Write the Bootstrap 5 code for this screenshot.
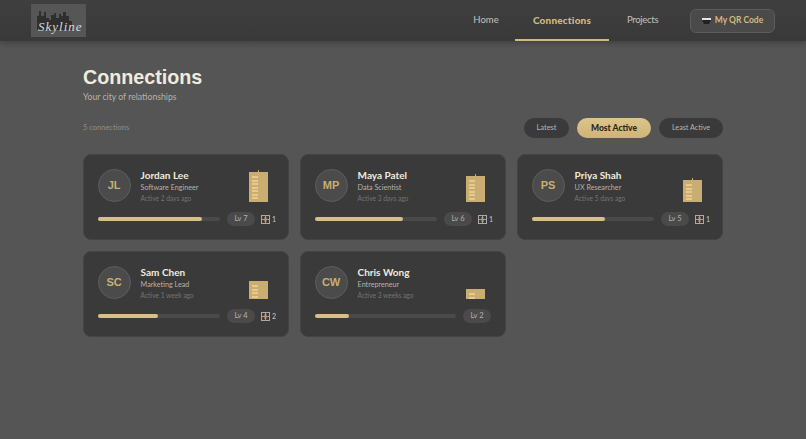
<!DOCTYPE html>
<html lang="en">
<head>
    <meta charset="UTF-8">
    <meta name="viewport" content="width=device-width, initial-scale=1.0">
    <title>Connections - Skyline</title>
    <link href="https://cdn.jsdelivr.net/npm/bootstrap@5.3.0/dist/css/bootstrap.min.css" rel="stylesheet">
    <style>
        body {
            font-family: 'Lato', 'Noto Sans', sans-serif;
            background: #555555;
            color: #f0ebdf;
            min-height: 439px;
        }
        .top-bar {
            height: 41px;
            padding: 0 31px;
            background: linear-gradient(180deg, #3f3f3f, #393939);
            box-shadow: 0 2px 6px rgba(0, 0, 0, 0.25);
        }
        .logo-box {
            width: 55px;
            height: 33px;
            background: #565656;
        }
        .logo-box svg { top: 4px; left: 3px; }
        .logo-word {
            top: 15px;
            left: 7px;
            font-family: 'Liberation Serif', serif;
            font-style: italic;
            font-size: 13px;
            letter-spacing: 1px;
            color: #d8d8d8;
            line-height: 16px;
        }
        .main-link {
            height: 41px;
            font-size: 9.5px;
            color: #c4c1ba;
            text-decoration: none;
            padding-top: 14px;
            line-height: 12px;
            text-align: center;
        }
        .main-link.current {
            color: #d4b97e;
            font-size: 10px;
            font-weight: 900;
            letter-spacing: .2px;
            border-bottom: 2px solid #d4b97e;
        }
        .link-home { width: 30px; margin-right: 14px; }
        .link-conn { width: 94px; margin-right: 18px; }
        .link-proj { width: 30px; margin-right: 33px; letter-spacing: -.3px; white-space: nowrap; }
        .qr-btn {
            width: 85px;
            height: 24px;
            font-size: 8.5px;
            font-weight: 700;
            color: #d4b97e;
            background: #4a4a4a;
            border: 1px solid #5c5c5c;
            border-radius: 6px;
        }
        .page-wrap { width: 640px; margin-left: 83px; }
        .page-title {
            font-family: 'Liberation Sans', Arial, sans-serif;
            font-weight: 700;
            font-size: 19.7px;
            line-height: 24px;
            margin: 24px 0 0;
            color: #f0ebdf;
        }
        .page-sub { font-size: 8.7px; line-height: 12px; margin-top: 2px; color: #b5b2ac; }
        .filter-row { margin-top: 15px; height: 20px; }
        .conn-count { font-size: 7.5px; color: #8f8d88; }
        .pill-btn {
            height: 20px;
            padding: 0;
            font-size: 7.5px;
            color: #b9b6b0;
            background: #3a3a3a;
            border: 0;
            border-radius: 10px;
        }
        .pill-latest { width: 45px; }
        .pill-most { width: 74px; font-size: 8.5px; font-weight: 900; color: #2b2620; background: linear-gradient(180deg, #dcc48c, #cfb478); }
        .pill-least { width: 64px; font-size: 7.2px; }
        .conn-grid {
            display: grid;
            grid-template-columns: repeat(3, 206px);
            gap: 11px;
            margin-top: 16px;
        }
        .conn-card {
            height: 86px;
            padding: 14px 14px 13px 13.6px;
            background: #3a3a3a;
            border: 1px solid #444444;
            border-radius: 8px;
        }
        .conn-top { height: 33px; }
        .avatar-ring {
            width: 33px;
            height: 33px;
            flex: none;
            font-family: 'Liberation Sans', Arial, sans-serif;
            font-weight: 700;
            font-size: 11px;
            color: #c9ae74;
            background: #4b4b4b;
            border: 1px solid #5e5e5e;
            border-radius: 50%;
        }
        .conn-info { margin-left: 10px; }
        .conn-name { font-size: 10px; font-weight: 700; line-height: 12px; color: #f0ebdf; }
        .conn-role { font-size: 7.2px; line-height: 10px; margin-top: 2px; color: #b5b2ac; }
        .conn-seen { font-size: 6.6px; line-height: 10px; color: #76746f; }
        .tower { width: 19px; flex: none; background: #c9ad72; margin-left: auto; margin-right: 6px; padding: 4px 0 0 3px; }
        .tower.has-mast::before { content: ""; position: absolute; top: -2px; left: 9px; width: 1px; height: 2px; background: #c9ad72; }
        .tower-win { width: 6px; height: 2px; margin-bottom: 1.5px; background: #e6cc8c; }
        .conn-bottom { margin-top: 10px; height: 14px; }
        .meter { height: 4px; background: #4a4a4a; border-radius: 2px; }
        .meter-fill { height: 100%; background: #d8bf85; border-radius: 2px; }
        .lv-pill {
            width: 28px;
            height: 14px;
            flex: none;
            margin-left: 7px;
            font-size: 7.5px;
            color: #b5b2ac;
            background: #4a4a4a;
            border-radius: 7px;
        }
        .proj-tag { width: 13px; flex: none; margin-left: 6px; font-size: 7px; color: #c9c6c0; gap: 2px; }
    </style>
</head>
<body>
    <div class="top-bar d-flex align-items-center justify-content-between position-relative">
        <div class="logo-box position-relative">
            <svg class="position-absolute" width="48" height="26" viewBox="0 0 48 26">
                <path d="M3 22V8h2V3h2v5h3V4h2v6h3v2h2V7h3V5h2v5h3V6h2v2h2V4h3v4h3v5h3v9z" fill="#2f2f2f"/>
            </svg>
            <span class="logo-word position-absolute">Skyline</span>
        </div>
        <nav class="d-flex align-items-center">
            <a class="main-link link-home" href="#">Home</a>
            <a class="main-link link-conn current" href="#">Connections</a>
            <a class="main-link link-proj" href="#">Projects</a>
            <button class="qr-btn btn d-flex align-items-center justify-content-center gap-1 p-0">
                <svg width="9" height="6" viewBox="0 0 9 6"><rect width="9" height="2" fill="#e6e6e6"/><path d="M0 2h9L7 6H2z" fill="#222"/></svg>
                <span>My QR Code</span>
            </button>
        </nav>
    </div>

    <div class="page-wrap">
        <h1 class="page-title">Connections</h1>
        <div class="page-sub">Your city of relationships</div>

        <div class="filter-row d-flex align-items-center justify-content-between">
            <span class="conn-count">5 connections</span>
            <div class="d-flex gap-2">
                <button class="pill-btn pill-latest">Latest</button>
                <button class="pill-btn pill-most">Most Active</button>
                <button class="pill-btn pill-least">Least Active</button>
            </div>
        </div>

        <div class="conn-grid" id="connGrid"></div>
    </div>

    <script src="https://cdn.jsdelivr.net/npm/bootstrap@5.3.0/dist/js/bootstrap.bundle.min.js"></script>
    <script>
        const people = [
            { ini: 'JL', name: 'Jordan Lee', role: 'Software Engineer', seen: '2 days ago', lv: 7, pct: 85, h: 30, win: 7, proj: 1 },
            { ini: 'MP', name: 'Maya Patel', role: 'Data Scientist', seen: '3 days ago', lv: 6, pct: 72, h: 26, win: 6, proj: 1 },
            { ini: 'PS', name: 'Priya Shah', role: 'UX Researcher', seen: '5 days ago', lv: 5, pct: 60, h: 22, win: 5, proj: 1 },
            { ini: 'SC', name: 'Sam Chen', role: 'Marketing Lead', seen: '1 week ago', lv: 4, pct: 49, h: 18, win: 4, proj: 2 },
            { ini: 'CW', name: 'Chris Wong', role: 'Entrepreneur', seen: '3 weeks ago', lv: 2, pct: 24, h: 10, win: 2, proj: 0 }
        ];

        const projIcon = `<svg width="9" height="9" viewBox="0 0 9 9" class="flex-shrink-0"><rect x=".5" y=".5" width="8" height="8" fill="none" stroke="#a9aab0"/><rect x="3" y="2" width="3" height="5" fill="#8a5f4e"/><path d="M4.5 1v7M1 4.5h7" stroke="#a9a08c"/></svg>`;

        document.getElementById('connGrid').innerHTML = people.map(p => {
            const windows = '<div class="tower-win"></div>'.repeat(p.win);
            const tag = p.proj ? `<span class="proj-tag d-flex align-items-center">${projIcon}${p.proj}</span>` : '';
            const mast = p.h > 20 ? 'has-mast' : '';
            return `
            <div class="conn-card">
                <div class="conn-top d-flex align-items-end">
                    <div class="avatar-ring d-flex align-items-center justify-content-center align-self-start">${p.ini}</div>
                    <div class="conn-info align-self-start">
                        <div class="conn-name">${p.name}</div>
                        <div class="conn-role">${p.role}</div>
                        <div class="conn-seen">Active ${p.seen}</div>
                    </div>
                    <div class="tower position-relative ${mast}" style="height: ${p.h}px">${windows}</div>
                </div>
                <div class="conn-bottom d-flex align-items-center">
                    <div class="meter flex-grow-1"><div class="meter-fill" style="width: ${p.pct}%"></div></div>
                    <span class="lv-pill d-flex align-items-center justify-content-center">Lv ${p.lv}</span>
                    ${tag}
                </div>
            </div>`;
        }).join('');
    </script>
</body>
</html>
